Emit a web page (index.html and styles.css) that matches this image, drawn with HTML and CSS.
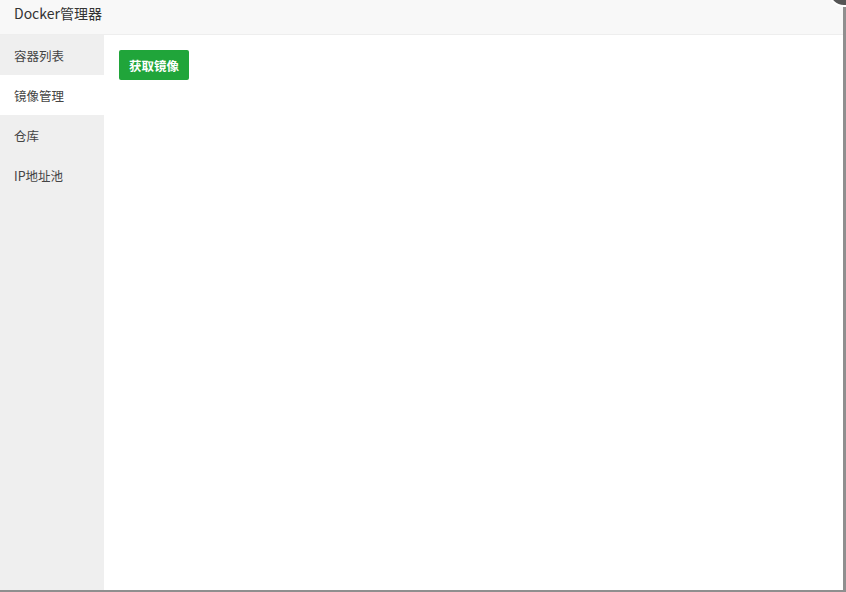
FILE: index.html
```html
<!DOCTYPE html>
<html lang="zh-CN">
<head>
    <meta charset="UTF-8">
    <title>Docker管理器</title>
    <link rel="stylesheet" href="styles.css">
</head>
<body>
    <div class="layer">
        <div class="layer-title">Docker管理器</div>
        <div class="layer-body">
            <ul class="side-menu">
                <li>容器列表</li>
                <li class="active">镜像管理</li>
                <li>仓库</li>
                <li>IP地址池</li>
            </ul>
            <div class="main">
                <button class="btn-success">获取镜像</button>
            </div>
        </div>
        <span class="layer-close"></span>
    </div>
</body>
</html>
```

FILE: styles.css
```css
body, html {
    margin: 0;
    padding: 0;
    height: 100%;
    overflow: hidden;
    background: #8f8f8f;
    font-family: "Noto Sans CJK SC", "Open Sans", sans-serif;
}
.layer {
    position: relative;
    width: 843px;
    height: 590px;
    background: #fff;
    display: flex;
    flex-direction: column;
}
.layer-title {
    height: 34px;
    line-height: 27px;
    padding-left: 14px;
    font-size: 14px;
    color: #333;
    background: #f8f8f8;
    border-bottom: 1px solid #eee;
    flex-shrink: 0;
}
.layer-body {
    flex: 1;
    display: flex;
}
.side-menu {
    list-style: none;
    margin: 0;
    padding: 0;
    width: 104px;
    background: #efefef;
}
.side-menu li {
    height: 40px;
    line-height: 41px;
    padding-left: 14px;
    font-size: 12.5px;
    color: #444;
}
.side-menu li.active {
    background: #fff;
}
.main {
    flex: 1;
    padding: 15px 15px;
}
.btn-success {
    height: 30px;
    padding: 0 10px;
    border: none;
    border-radius: 2px;
    background: #20a53a;
    color: #fff;
    font-family: inherit;
    font-size: 12.5px;
    font-weight: bold;
}
.layer-close {
    position: absolute;
    top: -25px;
    left: 828px;
    width: 28px;
    height: 28px;
    border: 2px solid #fff;
    border-radius: 50%;
    background: #555;
}
```
